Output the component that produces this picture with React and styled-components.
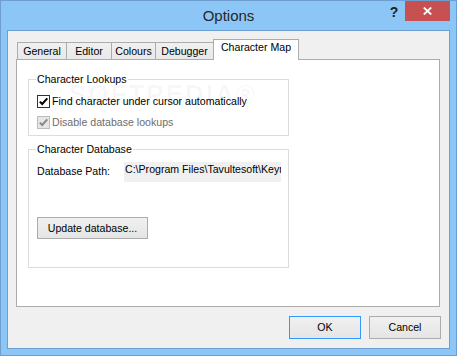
import React from "react";
import styled, { createGlobalStyle } from "styled-components";

const GlobalStyle = createGlobalStyle`
  html, body { margin: 0; padding: 0; background: #ffffff; }
  body { font-family: "Liberation Sans", Arial, sans-serif; font-size: 10.6px; color: #000; }
  * { box-sizing: border-box; }
`;

const Window = styled.div`
  width: 457px;
  height: 356px;
  border: 1px solid #6e9ecf;
  background: #8bc6f7;
  padding: 0 6px 6px;
  display: flex;
  flex-direction: column;
`;

const TitleBar = styled.div`
  height: 29px;
  display: grid;
  grid-template-columns: 1fr auto 1fr;
  align-items: start;
`;

const Title = styled.div`
  grid-column: 2;
  margin-top: 6px;
  font-family: "Liberation Sans", Arial, sans-serif;
  font-size: 15px;
  line-height: 17px;
  color: #262626;
`;

const Controls = styled.div`
  grid-column: 3;
  justify-self: end;
  display: flex;
  align-items: flex-start;
`;

const HelpButton = styled.div`
  width: 22px;
  height: 20px;
  display: flex;
  align-items: center;
  justify-content: center;
  font-family: "Liberation Sans", Arial, sans-serif;
  font-weight: bold;
  font-size: 14px;
  line-height: 14px;
  padding-top: 1px;
  color: #1e1e1e;
`;

const CloseButton = styled.div`
  width: 45px;
  height: 20px;
  background: #c75050;
  display: flex;
  align-items: center;
  justify-content: center;
`;

const Client = styled.div`
  flex: 1;
  border: 1px solid #6e9ecf;
  background: #f0f0f0;
  padding: 8px 8px 9px 8px;
  display: flex;
  flex-direction: column;
`;

const TabStrip = styled.div`
  height: 20px;
  display: flex;
  align-items: flex-end;
  padding-left: 1px;
  position: relative;
  z-index: 1;
`;

const Tab = styled.div`
  width: ${(p) => p.$w}px;
  height: ${(p) => (p.$active ? 21 : 17)}px;
  margin-bottom: ${(p) => (p.$active ? -1 : 0)}px;
  margin-left: ${(p) => (p.$first ? 0 : -1)}px;
  padding-top: ${(p) => (p.$active ? 1 : 2)}px;
  border: 1px solid #acacac;
  border-bottom: none;
  background: ${(p) => (p.$active ? "#ffffff" : "linear-gradient(#f0f0f0, #e8e8e8)")};
  text-align: center;
  line-height: 13px;
  white-space: nowrap;
  position: relative;
  z-index: ${(p) => (p.$active ? 2 : 1)};
`;

const Panel = styled.div`
  height: 248px;
  margin-right: 1px;
  background: #ffffff;
  border: 1px solid #acacac;
  padding: 13px 0 0 11px;
  display: flex;
  flex-direction: column;
  gap: 7px;
  position: relative;
`;

const GroupBox = styled.fieldset`
  margin: 0;
  min-width: 0;
  width: 261px;
  border: 1px solid #dcdcdc;
  padding: ${(p) => p.$pad};
  display: flex;
  flex-direction: column;
  align-items: flex-start;
  gap: ${(p) => p.$gap || 0}px;
`;

const Legend = styled.legend`
  padding: 0 1px;
  margin-left: -1px;
  line-height: 13px;
`;

const CheckRow = styled.div`
  display: flex;
  align-items: center;
  height: 13px;
  gap: 2px;
  color: ${(p) => (p.$disabled ? "#6d6d6d" : "#000")};
  line-height: 13px;
  white-space: nowrap;
`;

const CheckBox = styled.span`
  width: 13px;
  height: 13px;
  flex: none;
  border: 1px solid ${(p) => (p.$disabled ? "#bcbcbc" : "#333333")};
  background: ${(p) => (p.$disabled ? "#e6e6e6" : "#ffffff")};
  display: flex;
  align-items: center;
  justify-content: center;
`;

const PathRow = styled.div`
  display: flex;
  align-items: flex-start;
  height: 20px;
`;

const PathLabel = styled.div`
  width: 87px;
  margin-top: 3px;
  line-height: 13px;
  white-space: nowrap;
`;

const PathField = styled.div`
  width: 157px;
  height: 20px;
  background: #f0f0f0;
  padding: 1px 0 0 1px;
  overflow: hidden;
  white-space: nowrap;
  line-height: 13px;
`;

const Button = styled.div`
  width: ${(p) => p.$w}px;
  height: ${(p) => p.$h}px;
  margin-top: ${(p) => p.$mt || 0}px;
  border: 1px solid ${(p) => (p.$default ? "#3399ff" : "#acacac")};
  background: linear-gradient(#f0f0f0, #e5e5e5);
  display: flex;
  align-items: center;
  justify-content: center;
  line-height: 13px;
  white-space: nowrap;
`;

const Footer = styled.div`
  margin-top: 9px;
  display: flex;
  justify-content: flex-end;
  gap: 8px;
`;

const Watermark = styled.div`
  position: absolute;
  left: 52px;
  top: 19px;
  font-family: "Liberation Sans", Arial, sans-serif;
  font-weight: bold;
  font-size: 26px;
  letter-spacing: 2px;
  color: rgba(0, 0, 0, 0.035);
  pointer-events: none;
  white-space: nowrap;
`;

const Check = ({ color }) => (
  <svg width="11" height="11" viewBox="0 0 11 11">
    <polyline points="1.8,5.6 4.2,8 9.3,2.3" fill="none" stroke={color} strokeWidth="2" />
  </svg>
);

const tabs = [
  { label: "General", w: 50 },
  { label: "Editor", w: 46 },
  { label: "Colours", w: 45 },
  { label: "Debugger", w: 59 },
  { label: "Character Map", w: 86, active: true },
];

export default function App() {
  return (
    <>
      <GlobalStyle />
      <Window>
        <TitleBar>
          <Title>Options</Title>
          <Controls>
            <HelpButton>?</HelpButton>
            <CloseButton>
              <svg width="9" height="8" viewBox="0 0 9 8">
                <path d="M0.8 0.5 L8.2 7.5 M8.2 0.5 L0.8 7.5" stroke="#ffffff" strokeWidth="1.8" />
              </svg>
            </CloseButton>
          </Controls>
        </TitleBar>
        <Client>
          <TabStrip>
            {tabs.map((t, i) => (
              <Tab key={t.label} $w={t.w} $active={t.active} $first={i === 0}>
                {t.label}
              </Tab>
            ))}
          </TabStrip>
          <Panel>
            <GroupBox $pad="9px 8px 6px 8px" $gap={8}>
              <Legend>Character Lookups</Legend>
              <CheckRow>
                <CheckBox>
                  <Check color="#000" />
                </CheckBox>
                Find character under cursor automatically
              </CheckRow>
              <CheckRow $disabled>
                <CheckBox $disabled>
                  <Check color="#8a8a8a" />
                </CheckBox>
                Disable database lookups
              </CheckRow>
            </GroupBox>
            <GroupBox $pad="6px 8px 28px 8px">
              <Legend>Character Database</Legend>
              <PathRow>
                <PathLabel>Database Path:</PathLabel>
                <PathField>C:\Program Files\Tavultesoft\Keyman Developer\</PathField>
              </PathRow>
              <Button $w={111} $h={22} $mt={35}>
                Update database...
              </Button>
            </GroupBox>
            <Watermark>SOFTPEDIA®</Watermark>
          </Panel>
          <Footer>
            <Button $w={72} $h={23} $default>
              OK
            </Button>
            <Button $w={72} $h={23}>
              Cancel
            </Button>
          </Footer>
        </Client>
      </Window>
    </>
  );
}
